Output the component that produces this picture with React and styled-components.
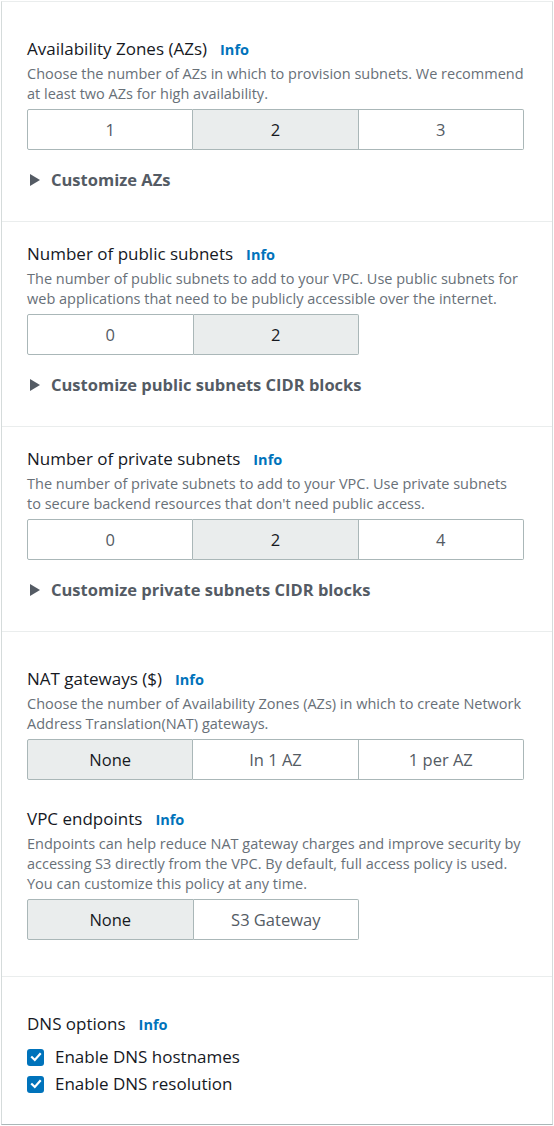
import React, { useState } from "react";
import styled, { createGlobalStyle } from "styled-components";

const GlobalStyle = createGlobalStyle`
  body {
    margin: 0;
    background: #fff;
    font-family: "Open Sans", "Noto Sans", sans-serif;
    color: #16191f;
  }
`;

const Panel = styled.div`
  margin: 1px 1px 0 1px;
  border: 1px solid #d5dbdb;
  border-top-color: #eaeded;
  border-bottom-color: #aab7b8;
  background: #fff;
`;

const Section = styled.section`
  padding: ${(p) => p.$top}px 28px ${(p) => p.$bottom}px 25px;
  border-bottom: ${(p) => (p.$last ? "none" : "1px solid #eaeded")};
`;

const Field = styled.div`
  & + & {
    margin-top: ${(p) => p.$gap || 36}px;
  }
`;

const Label = styled.div`
  display: flex;
  align-items: baseline;
  gap: 13px;
  font-size: 17px;
  line-height: 22px;
  color: #16191f;
`;

const Info = styled.a`
  font-size: 14.5px;
  font-weight: 700;
  color: #0073bb;
  text-decoration: none;
`;

const Desc = styled.p`
  margin: 3px 0 0;
  font-size: 14.5px;
  line-height: 20px;
  color: #687078;
`;

const Segments = styled.div`
  display: flex;
  margin-top: 5px;
  width: ${(p) => (p.$count === 2 ? "66.8%" : "100%")};
`;

const Segment = styled.button`
  flex: 1;
  height: 41px;
  border: 1px solid #aab7b8;
  border-left-width: 0;
  background: ${(p) => (p.$active ? "#eaeded" : "#fff")};
  color: ${(p) => (p.$active ? "#16191f" : "#545b64")};
  font-family: inherit;
  font-size: 16.5px;
  padding: 0;
  cursor: pointer;
  &:first-child {
    border-left-width: 1px;
    border-radius: 2px 0 0 2px;
  }
  &:last-child {
    border-radius: 0 2px 2px 0;
  }
`;

const Expander = styled.div`
  display: flex;
  align-items: center;
  gap: 11px;
  margin-top: 19px;
  font-size: 16.5px;
  line-height: 22px;
  font-weight: 700;
  color: #545b64;
  cursor: pointer;
`;

const Caret = styled.span`
  width: 0;
  height: 0;
  margin-left: 3px;
  border-top: 6px solid transparent;
  border-bottom: 6px solid transparent;
  border-left: 10px solid #545b64;
`;

const Checks = styled.div`
  display: flex;
  flex-direction: column;
  gap: 5px;
  margin-top: 10px;
`;

const CheckRow = styled.label`
  display: flex;
  align-items: center;
  gap: 11px;
  font-size: 17px;
  line-height: 22px;
  color: #16191f;
  cursor: pointer;
`;

const Box = styled.span`
  width: 17px;
  height: 17px;
  border-radius: 3px;
  background: ${(p) => (p.$on ? "#0073bb" : "#fff")};
  border: ${(p) => (p.$on ? "none" : "2px solid #687078")};
  display: flex;
  align-items: center;
  justify-content: center;
  box-sizing: border-box;
`;

function SegmentGroup({ options, value, onChange }) {
  return (
    <Segments $count={options.length}>
      {options.map((o) => (
        <Segment key={o} $active={o === value} onClick={() => onChange(o)}>
          {o}
        </Segment>
      ))}
    </Segments>
  );
}

function Check({ label, on, onToggle }) {
  return (
    <CheckRow onClick={onToggle}>
      <Box $on={on}>
        {on && (
          <svg width="12" height="12" viewBox="0 0 12 12">
            <path d="M2 6.2 L4.8 9 L10 3" fill="none" stroke="#fff" strokeWidth="2.2" strokeLinecap="square" />
          </svg>
        )}
      </Box>
      {label}
    </CheckRow>
  );
}

const App = () => {
  const [azs, setAzs] = useState("2");
  const [pub, setPub] = useState("2");
  const [priv, setPriv] = useState("2");
  const [nat, setNat] = useState("None");
  const [vpce, setVpce] = useState("None");
  const [hostnames, setHostnames] = useState(true);
  const [resolution, setResolution] = useState(true);

  return (
    <>
      <GlobalStyle />
      <Panel>
        <Section $top={36} $bottom={30}>
          <Label>
            Availability Zones (AZs) <Info>Info</Info>
          </Label>
          <Desc>
            Choose the number of AZs in which to provision subnets. We recommend
            at least two AZs for high availability.
          </Desc>
          <SegmentGroup options={["1", "2", "3"]} value={azs} onChange={setAzs} />
          <Expander>
            <Caret />
            Customize AZs
          </Expander>
        </Section>

        <Section $top={21} $bottom={30}>
          <Label>
            Number of public subnets <Info>Info</Info>
          </Label>
          <Desc>
            The number of public subnets to add to your VPC. Use public subnets for
            web applications that need to be publicly accessible over the internet.
          </Desc>
          <SegmentGroup options={["0", "2"]} value={pub} onChange={setPub} />
          <Expander>
            <Caret />
            Customize public subnets CIDR blocks
          </Expander>
        </Section>

        <Section $top={21} $bottom={30}>
          <Label>
            Number of private subnets <Info>Info</Info>
          </Label>
          <Desc>
            The number of private subnets to add to your VPC. Use private subnets
            to secure backend resources that don't need public access.
          </Desc>
          <SegmentGroup options={["0", "2", "4"]} value={priv} onChange={setPriv} />
          <Expander>
            <Caret />
            Customize private subnets CIDR blocks
          </Expander>
        </Section>

        <Section $top={36} $bottom={36}>
          <Field>
            <Label>
              NAT gateways ($) <Info>Info</Info>
            </Label>
            <Desc>
              Choose the number of Availability Zones (AZs) in which to create Network
              Address Translation(NAT) gateways.
            </Desc>
            <SegmentGroup options={["None", "In 1 AZ", "1 per AZ"]} value={nat} onChange={setNat} />
          </Field>
          <Field $gap={28}>
            <Label>
              VPC endpoints <Info>Info</Info>
            </Label>
            <Desc>
              Endpoints can help reduce NAT gateway charges and improve security by
              accessing S3 directly from the VPC. By default, full access policy is used.
              You can customize this policy at any time.
            </Desc>
            <SegmentGroup options={["None", "S3 Gateway"]} value={vpce} onChange={setVpce} />
          </Field>
        </Section>

        <Section $top={36} $bottom={29} $last>
          <Label>
            DNS options <Info>Info</Info>
          </Label>
          <Checks>
            <Check label="Enable DNS hostnames" on={hostnames} onToggle={() => setHostnames(!hostnames)} />
            <Check label="Enable DNS resolution" on={resolution} onToggle={() => setResolution(!resolution)} />
          </Checks>
        </Section>
      </Panel>
    </>
  );
};

export default App;
